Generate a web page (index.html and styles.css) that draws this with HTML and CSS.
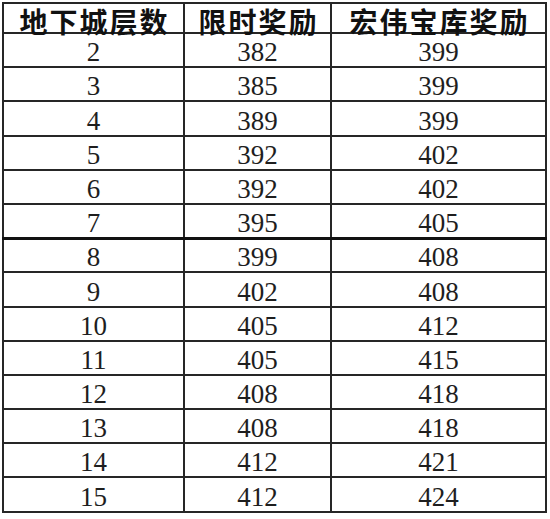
FILE: index.html
```html
<!DOCTYPE html>
<html lang="zh">
<head>
<meta charset="utf-8">
<link rel="stylesheet" href="styles.css">
</head>
<body>
<div class="sheet">
<table class="grid">
  <colgroup>
    <col class="c1"><col class="c2"><col class="c3">
  </colgroup>
  <thead>
    <tr class="head"><th>地下城层数</th><th>限时奖励</th><th>宏伟宝库奖励</th></tr>
  </thead>
  <tbody>
    <tr><td>2</td><td>382</td><td>399</td></tr>
    <tr><td>3</td><td>385</td><td>399</td></tr>
    <tr><td>4</td><td>389</td><td>399</td></tr>
    <tr><td>5</td><td>392</td><td>402</td></tr>
    <tr><td>6</td><td>392</td><td>402</td></tr>
    <tr class="thick"><td>7</td><td>395</td><td>405</td></tr>
    <tr><td>8</td><td>399</td><td>408</td></tr>
    <tr><td>9</td><td>402</td><td>408</td></tr>
    <tr><td>10</td><td>405</td><td>412</td></tr>
    <tr><td>11</td><td>405</td><td>415</td></tr>
    <tr><td>12</td><td>408</td><td>418</td></tr>
    <tr><td>13</td><td>408</td><td>418</td></tr>
    <tr><td>14</td><td>412</td><td>421</td></tr>
    <tr><td>15</td><td>412</td><td>424</td></tr>
  </tbody>
</table>
</div>
</body>
</html>
```

FILE: styles.css
```css
html, body {
  margin: 0;
  padding: 0;
  background: #ffffff;
}

.sheet {
  padding: 2px 0 0 2px;
}

.grid {
  border-collapse: collapse;
  table-layout: fixed;
  width: 543px;
  color: #1e1e1e;
}

.c1 { width: 181px; }
.c2 { width: 147px; }
.c3 { width: 215px; }

.grid th,
.grid td {
  border: 2px solid #262626;
  padding: 0;
  text-align: center;
  white-space: nowrap;
}

.grid th {
  height: 30px;
  font-family: "Noto Sans CJK SC", "Noto Sans", sans-serif;
  font-weight: 700;
  font-size: 28px;
  line-height: 22px;
  letter-spacing: 2px;
  text-indent: 2px;
  vertical-align: middle;
  padding-top: 6px;
  box-sizing: border-box;
  color: #111;
}

.grid td {
  height: 34.2px;
  box-sizing: border-box;
  font-family: "Liberation Serif", "DejaVu Serif", serif;
  font-size: 27px;
  line-height: 27px;
  vertical-align: bottom;
  padding-bottom: 0;
}

.grid tr.thick td {
  border-bottom: 3px solid #111;
}
```
